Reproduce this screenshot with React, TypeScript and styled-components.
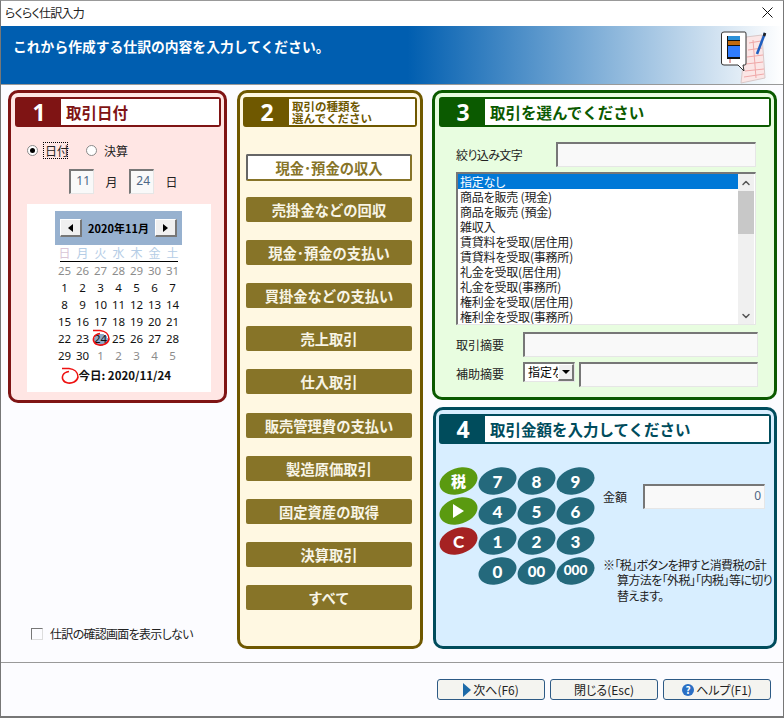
import { createGlobalStyle, styled } from 'styled-components';
import { ChevronDown, ChevronUp } from 'lucide-react';

const GlobalStyle = createGlobalStyle`
  html, body {
    margin: 0;
    padding: 0;
    background: #fff;
  }
  * {
    box-sizing: border-box;
  }
  body {
    font-family: 'Noto Sans CJK JP', 'Noto Sans', sans-serif;
    font-size: 12px;
    font-feature-settings: 'palt';
    color: #222;
  }
`;

const Window = styled.div`
  width: 784px;
  height: 718px;
  border: 1px solid #777;
  border-bottom-width: 2px;
  border-top-color: #999;
  background: #fcfcff;
  display: flex;
  flex-direction: column;
  overflow: hidden;
`;

const TitleBar = styled.div`
  height: 25px;
  flex: none;
  background: #fff;
  display: flex;
  align-items: center;
  justify-content: space-between;
  padding: 0 10px 2px 4px;
  letter-spacing: -0.8px;
`;

const Banner = styled.div`
  height: 58px;
  flex: none;
  display: flex;
  align-items: flex-start;
  justify-content: space-between;
  padding: 4px 15px 0 12px;
  background: linear-gradient(90deg, #005eb0 0%, #005eb0 52%, #ffffff 100%);
`;

const BannerText = styled.div`
  margin-top: 6px;
  color: #fff;
  font-size: 13.8px;
  font-feature-settings: normal;
  font-weight: 700;
  line-height: 20px;
`;

const Main = styled.div`
  height: 579px;
  flex: none;
  border-top: 1px solid #999;
  border-bottom: 1px solid #999;
  padding: 5px 0 0 7px;
  display: flex;
  align-items: flex-start;
`;

const DateColumn = styled.div`
  width: 219px;
  height: 559px;
  margin-right: 10px;
  display: flex;
  flex-direction: column;
`;

const RightColumn = styled.div`
  width: 345px;
  margin-left: 9px;
  display: flex;
  flex-direction: column;
  align-items: flex-end;
  gap: 7px;
`;

const Panel = styled.section<{ $color: string; $bg: string; $w?: number; $h: number; $pl?: number }>`
  width: ${(p) => (p.$w ? `${p.$w}px` : '100%')};
  height: ${(p) => p.$h}px;
  flex: none;
  padding: 4px 3px 4px ${(p) => p.$pl ?? 4}px;
  border: 3px solid ${(p) => p.$color};
  border-radius: 10px;
  background: ${(p) => p.$bg};
  color: ${(p) => p.$color};
`;

const PanelHead = styled.div`
  height: 30px;
  display: flex;
  border: 2px solid currentColor;
  border-radius: 3px;
  background: currentColor;
`;

const PanelNum = styled.div`
  width: 44px;
  flex: none;
  color: #fff;
  font-family: 'Noto Sans', sans-serif;
  font-size: 23px;
  font-weight: 700;
  line-height: 26px;
  text-align: center;
`;

const PanelTitle = styled.div<{ $color: string; $small?: boolean }>`
  flex: 1;
  background: #fff;
  color: ${(p) => p.$color};
  padding: ${(p) => (p.$small ? '1px 0 0 3px' : '0 0 0 5px')};
  font-size: ${(p) => (p.$small ? 11.5 : 15.5)}px;
  font-feature-settings: normal;
  font-weight: 700;
  line-height: ${(p) => (p.$small ? '12px' : '26px')};
  white-space: nowrap;
`;

const RadioRow = styled.div`
  margin: 15px 0 0 12px;
  height: 17px;
  display: flex;
  align-items: center;
  color: #222;
`;

const Radio = styled.span<{ $on?: boolean }>`
  width: 11px;
  height: 11px;
  flex: none;
  border-radius: 50%;
  border: 1px solid #8a8a8a;
  background: #fff;
  display: flex;
  align-items: center;
  justify-content: center;
  &::after {
    content: '';
    width: 5px;
    height: 5px;
    border-radius: 50%;
    background: ${(p) => (p.$on ? '#000' : 'transparent')};
  }
`;

const RadioLabel = styled.span<{ $focus?: boolean }>`
  margin: 0 18px 0 5px;
  padding: 0 1px;
  width: 25px;
  height: 17px;
  line-height: 15px;
  white-space: nowrap;
  border: 1px dotted ${(p) => (p.$focus ? '#000' : 'transparent')};
`;

const DateRow = styled.div`
  margin: 10px 0 0 54px;
  display: flex;
  align-items: center;
  color: #222;
`;

const Sunken = styled.div<{ $w: number; $align?: string }>`
  width: ${(p) => p.$w}px;
  height: 25px;
  flex: none;
  border-style: solid;
  border-width: 2px 1px 1px 2px;
  border-color: #777 #e6e6e6 #e6e6e6 #777;
  background: #f9f9f9;
  color: #4d6785;
  text-align: ${(p) => p.$align || 'left'};
  padding-right: 3px;
  line-height: 19px;
  font-family: 'Noto Sans', sans-serif;
  font-size: 12px;
`;

const DateUnit = styled.span`
  width: 35px;
  text-align: center;
`;

const Calendar = styled.div`
  margin: 10px 0 0 12px;
  width: 184px;
  height: 188px;
  padding: 7px 1px 0 0;
  background: #fff;
  display: flex;
  flex-direction: column;
  align-items: center;
  color: #111;
`;

const CalHead = styled.div`
  width: 127px;
  height: 34px;
  flex: none;
  background: #97b1cf;
  display: flex;
  align-items: center;
  justify-content: space-between;
  padding: 0 5px;
  font-size: 11px;
  font-weight: 700;
  color: #000;
`;

const CalNav = styled.div`
  width: 22px;
  height: 18px;
  background: #f0f0f0;
  border-style: solid;
  border-width: 1px 2px 2px 1px;
  border-color: #fff #777 #777 #fff;
  display: flex;
  align-items: center;
  justify-content: center;
`;

const Arrow = styled.span<{ $left?: boolean }>`
  width: 0;
  height: 0;
  border-style: solid;
  border-width: 4px 0 4px 5px;
  border-color: transparent transparent transparent #000;
  transform: ${(p) => (p.$left ? 'rotate(180deg)' : 'none')};
`;

const WeekRow = styled.div`
  width: 126px;
  height: 17px;
  flex: none;
  display: grid;
  grid-template-columns: repeat(7, 18px);
  text-align: center;
  line-height: 16px;
  position: relative;
  &::after {
    content: '';
    position: absolute;
    left: 4px;
    right: 4px;
    bottom: 0;
    height: 1px;
    background: #000;
  }
`;

const WeekDay = styled.span<{ $sun?: boolean }>`
  color: ${(p) => (p.$sun ? '#d9c6d6' : '#b5cde6')};
`;

const DayGrid = styled.div`
  width: 126px;
  flex: none;
  display: grid;
  grid-template-columns: repeat(7, 18px);
  grid-auto-rows: 17px;
`;

const Day = styled.span<{ $muted?: boolean; $picked?: boolean }>`
  position: relative;
  text-align: center;
  font-family: 'Noto Sans', sans-serif;
  font-size: 11.5px;
  line-height: 17px;
  color: ${(p) => (p.$muted ? '#8c8c8c' : '#111')};
  background: ${(p) =>
    p.$picked
      ? 'radial-gradient(ellipse 7px 6px at 50% 58%, #8ea8c8 96%, transparent 100%)'
      : 'transparent'};
`;

const Scribble = styled.svg<{ $over?: boolean }>`
  flex: none;
  ${(p) =>
    p.$over &&
    `
    position: absolute;
    left: 0;
    top: -1px;
  `}
`;

const TodayRow = styled.div`
  margin-top: 2px;
  width: 126px;
  height: 18px;
  display: flex;
  align-items: center;
  gap: 0;
  padding-left: 5px;
  font-size: 11.5px;
  font-weight: 700;
`;

const SkipCheck = styled.label`
  margin: auto 0 7px 23px;
  display: flex;
  align-items: center;
  gap: 7px;
  color: #222;
  letter-spacing: -0.7px;
`;

const CheckBox = styled.span`
  width: 12px;
  height: 12px;
  border-style: solid;
  border-width: 1px;
  border-color: #777 #ddd #ddd #777;
  background: #fcfcff;
`;

const TypeList = styled.div`
  margin: 27px 0 0 3px;
  width: 166px;
  display: flex;
  flex-direction: column;
  gap: 18.1px;
`;

const TypeButton = styled.div<{ $active?: boolean }>`
  height: ${(p) => (p.$active ? 27 : 25)}px;
  margin-bottom: ${(p) => (p.$active ? -2 : 0)}px;
  border-radius: 2px;
  border-style: solid;
  border-width: ${(p) => (p.$active ? '2px' : 0)};
  border-color: ${(p) => (p.$active ? '#666 #877428 #877428 #666' : 'transparent')};
  background: ${(p) => (p.$active ? '#fff' : '#877428')};
  color: ${(p) => (p.$active ? '#877428' : '#f8f5e6')};
  font-size: 14.3px;
  font-feature-settings: normal;
  font-weight: 700;
  line-height: ${(p) => (p.$active ? 23 : 25)}px;
  text-align: center;
  white-space: nowrap;
`;

const FieldRow = styled.div<{ $top: number }>`
  margin: ${(p) => p.$top}px 0 0 17px;
  display: flex;
  align-items: flex-start;
  color: #222;
`;

const FieldLabel = styled.span<{ $w: number; $pt?: number; $tight?: boolean }>`
  width: ${(p) => p.$w}px;
  flex: none;
  line-height: 25px;
  margin-top: ${(p) => p.$pt ?? 0}px;
  letter-spacing: ${(p) => (p.$tight ? '-0.6px' : 'normal')};
`;

const ListBox = styled.div`
  margin: 5px 0 0 17px;
  width: 300px;
  height: 153px;
  display: flex;
  border-style: solid;
  border-width: 2px 1px 1px 2px;
  border-color: #777 #e6e6e6 #e6e6e6 #777;
  background: #fff;
  color: #222;
  overflow: hidden;
`;

const ListRows = styled.div`
  flex: 1;
`;

const ListRow = styled.div<{ $on?: boolean }>`
  height: 15px;
  line-height: 15px;
  padding-left: 2px;
  letter-spacing: -0.2px;
  background: ${(p) => (p.$on ? '#0078d7' : 'transparent')};
  color: ${(p) => (p.$on ? '#fff' : '#222')};
`;

const ScrollBar = styled.div`
  width: 16px;
  flex: none;
  background: #f0f0f0;
  margin-right: 1px;
  display: flex;
  flex-direction: column;
  align-items: center;
  color: #555;
`;

const ScrollCap = styled.div`
  height: 17px;
  flex: none;
  display: flex;
  align-items: center;
  justify-content: center;
`;

const ScrollThumb = styled.div`
  width: 100%;
  height: 43px;
  flex: none;
  background: #c8c8c8;
  margin-bottom: auto;
`;

const Combo = styled.div`
  width: 52px;
  height: 20px;
  flex: none;
  margin-right: 4px;
  display: flex;
  border-style: solid;
  border-width: 2px 1px 1px 2px;
  border-color: #777 #e6e6e6 #e6e6e6 #777;
  background: #fff;
  overflow: hidden;
`;

const ComboText = styled.span`
  flex: 1;
  overflow: hidden;
  white-space: nowrap;
  line-height: 16px;
  padding-left: 3px;
  color: #000;
`;

const ComboButton = styled.span`
  width: 16px;
  flex: none;
  background: #f0f0f0;
  border-style: solid;
  border-width: 1px 2px 2px 1px;
  border-color: #fff #777 #777 #fff;
  display: flex;
  align-items: center;
  justify-content: center;
  &::after {
    content: '';
    border-style: solid;
    border-width: 4px 4px 0 4px;
    border-color: #000 transparent transparent transparent;
  }
`;

const AmountBody = styled.div`
  margin-top: 23px;
  display: flex;
  padding-left: 1px;
`;

const KeyPad = styled.div`
  width: 156px;
  flex: none;
  display: grid;
  grid-template-columns: repeat(4, 39px);
  grid-auto-rows: 30px;
`;

const Key = styled.div<{ $bg: string; $size?: number; $col?: number }>`
  position: relative;
  width: 37px;
  height: 28px;
  grid-column: ${(p) => p.$col ?? 'auto'};
  display: flex;
  align-items: center;
  justify-content: center;
  color: #fff;
  font-family: Lato, 'Noto Sans CJK JP', sans-serif;
  font-size: ${(p) => p.$size ?? 17}px;
  font-weight: 900;
  line-height: 1;
  &::before {
    content: '';
    position: absolute;
    left: -1px;
    top: 1px;
    width: 39px;
    height: 26px;
    border-radius: 50%;
    background: ${(p) => p.$bg};
    transform: rotate(-18deg);
  }
  & > * {
    position: relative;
  }
`;

const PlayMark = styled.span`
  border-style: solid;
  border-width: 7px 0 7px 11px;
  border-color: transparent transparent transparent #fff;
`;

const AmountSide = styled.div`
  margin: 17px 0 0 7px;
  flex: 1;
  color: #222;
`;

const AmountRow = styled.div`
  display: flex;
  align-items: center;
`;

const AmountLabel = styled.span`
  width: 40px;
`;

const Note = styled.p`
  margin: 48px 0 0 0;
  padding-left: 14px;
  text-indent: -14px;
  line-height: 15.3px;
  font-size: 12px;
  letter-spacing: -0.6px;
  white-space: nowrap;
`;

const Footer = styled.div`
  flex: 1;
  display: flex;
  justify-content: flex-end;
  gap: 5px;
  padding: 16px 12px 0 0;
`;

const FootButton = styled.div`
  width: 108px;
  height: 21px;
  display: flex;
  align-items: center;
  justify-content: center;
  gap: 2px;
  border: 1px solid #2d5a85;
  border-radius: 3px;
  background: #f4f4f0;
  color: #222;
  line-height: 19px;
`;

const NextMark = styled.span`
  border-style: solid;
  border-width: 7px 0 7px 8px;
  border-color: transparent transparent transparent #1c6aa8;
`;

const HelpMark = styled.span`
  width: 12px;
  height: 12px;
  border-radius: 50%;
  background: #2a6fc4;
  color: #fff;
  font-size: 10px;
  font-weight: 700;
  line-height: 12px;
  text-align: center;
`;

const BannerIcon = () => (
  <svg width="48" height="54" viewBox="0 0 48 54">
    <path d="M26 7 L42 5 L45 48 L21 53 Z" fill="#fbe6e6" stroke="#d8c8c8" />
    <path
      d="M29 13 L41 11 M28 20 L42 18 M27 27 L43 25 M26 34 L43 32 M25 41 L44 39 M24 47 L44 44 M33 10 L36 48"
      stroke="#f0a8a8"
      strokeWidth="1"
    />
    <path d="M45 3 L37 24" stroke="#1f5fc0" strokeWidth="2.5" />
    <path d="M45 3 L44 6" stroke="#222" strokeWidth="2.5" />
    <path
      d="M4 2 H25 Q26 2 26 4 V33 Q26 35 25 35 H23 L24 41 L18 35 H4 Q1.5 35 1.5 33 V4 Q1.5 2 4 2 Z"
      fill="#fff"
      stroke="#333"
    />
    <rect x="7" y="6" width="13" height="23" fill="#111" />
    <rect x="8" y="6" width="12" height="4" fill="#2a90d8" />
    <rect x="8" y="11" width="12" height="4" fill="#c06a10" />
    <rect x="8" y="16" width="12" height="11" fill="#2f7cff" />
    <path d="M10 29 V33" stroke="#c05050" strokeWidth="1" />
  </svg>
);

const RedCircle = ({ over }: { over?: boolean }) => (
  <Scribble $over={over} width="18" height="17" viewBox="0 0 18 17" fill="none">
    <path
      d="M1 1.5 H8 C13 2 17 5 17 10 C16 15 11 16.5 7 16 C2 15.5 0.5 11 2 8 C3 6 5 5 8 4.5"
      stroke="#ee1111"
      strokeWidth="1.6"
    />
  </Scribble>
);

const WEEK = ['日', '月', '火', '水', '木', '金', '土'];
const DAYS = [
  25, 26, 27, 28, 29, 30, 31,
  1, 2, 3, 4, 5, 6, 7,
  8, 9, 10, 11, 12, 13, 14,
  15, 16, 17, 18, 19, 20, 21,
  22, 23, 24, 25, 26, 27, 28,
  29, 30, 1, 2, 3, 4, 5,
];

const TYPES = [
  '現金･預金の収入',
  '売掛金などの回収',
  '現金･預金の支払い',
  '買掛金などの支払い',
  '売上取引',
  '仕入取引',
  '販売管理費の支払い',
  '製造原価取引',
  '固定資産の取得',
  '決算取引',
  'すべて',
];

const ITEMS = [
  '指定なし',
  '商品を販売 (現金)',
  '商品を販売 (預金)',
  '雑収入',
  '賃貸料を受取(居住用)',
  '賃貸料を受取(事務所)',
  '礼金を受取(居住用)',
  '礼金を受取(事務所)',
  '権利金を受取(居住用)',
  '権利金を受取(事務所)',
];

const KEYS = [
  ['税', '#5a9a10', 15],
  ['7', '#24697c'],
  ['8', '#24697c'],
  ['9', '#24697c'],
  ['play', '#5a9a10'],
  ['4', '#24697c'],
  ['5', '#24697c'],
  ['6', '#24697c'],
  ['C', '#a52222'],
  ['1', '#24697c'],
  ['2', '#24697c'],
  ['3', '#24697c'],
] as const;

const DOWN_KEYS = [
  ['0', 17, 2],
  ['00', 15, 3],
  ['000', 13.5, 4],
] as const;

export default function App() {
  return (
    <>
      <GlobalStyle />
      <Window>
        <TitleBar>
          <span>らくらく仕訳入力</span>
          <svg width="11" height="11" viewBox="0 0 11 11">
            <path d="M0.5 0.5 L10.5 10.5 M10.5 0.5 L0.5 10.5" stroke="#111" strokeWidth="1" />
          </svg>
        </TitleBar>
        <Banner>
          <BannerText>これから作成する仕訳の内容を入力してください。</BannerText>
          <BannerIcon />
        </Banner>
        <Main>
          <DateColumn>
            <Panel $color="#7f1414" $bg="#ffe6e4" $h={313}>
              <PanelHead>
                <PanelNum>1</PanelNum>
                <PanelTitle $color="#7f1414">取引日付</PanelTitle>
              </PanelHead>
              <RadioRow>
                <Radio $on />
                <RadioLabel $focus>日付</RadioLabel>
                <Radio />
                <RadioLabel>決算</RadioLabel>
              </RadioRow>
              <DateRow>
                <Sunken $w={25} $align="right">11</Sunken>
                <DateUnit>月</DateUnit>
                <Sunken $w={25} $align="right">24</Sunken>
                <DateUnit>日</DateUnit>
              </DateRow>
              <Calendar>
                <CalHead>
                  <CalNav><Arrow $left /></CalNav>
                  <span>2020年11月</span>
                  <CalNav><Arrow /></CalNav>
                </CalHead>
                <WeekRow>
                  {WEEK.map((w, i) => (
                    <WeekDay key={w} $sun={i === 0}>{w}</WeekDay>
                  ))}
                </WeekRow>
                <DayGrid>
                  {DAYS.map((d, i) => {
                    const muted = i < 7 || i > 36;
                    const picked = i === 30;
                    return (
                      <Day key={i} $muted={muted} $picked={picked}>
                        {d}
                        {picked && <RedCircle over />}
                      </Day>
                    );
                  })}
                </DayGrid>
                <TodayRow>
                  <RedCircle />
                  今日: 2020/11/24
                </TodayRow>
              </Calendar>
            </Panel>
            <SkipCheck>
              <CheckBox />
              仕訳の確認画面を表示しない
            </SkipCheck>
          </DateColumn>

          <Panel $color="#6f5800" $bg="#fff8e2" $w={186} $h={559} $pl={3}>
            <PanelHead>
              <PanelNum>2</PanelNum>
              <PanelTitle $color="#6f5800" $small>
                取引の種類を
                <br />
                選んでください
              </PanelTitle>
            </PanelHead>
            <TypeList>
              {TYPES.map((t, i) => (
                <TypeButton key={t} $active={i === 0}>{t}</TypeButton>
              ))}
            </TypeList>
          </Panel>

          <RightColumn>
            <Panel $color="#0b5a00" $bg="#e8fde0" $h={310}>
              <PanelHead>
                <PanelNum>3</PanelNum>
                <PanelTitle $color="#0b5a00">取引を選んでください</PanelTitle>
              </PanelHead>
              <FieldRow $top={15}>
                <FieldLabel $w={100} $tight>絞り込み文字</FieldLabel>
                <Sunken $w={200} />
              </FieldRow>
              <ListBox>
                <ListRows>
                  {ITEMS.map((t, i) => (
                    <ListRow key={t} $on={i === 0}>{t}</ListRow>
                  ))}
                </ListRows>
                <ScrollBar>
                  <ScrollCap><ChevronUp size={12} strokeWidth={3} /></ScrollCap>
                  <ScrollThumb />
                  <ScrollCap><ChevronDown size={12} strokeWidth={3} /></ScrollCap>
                </ScrollBar>
              </ListBox>
              <FieldRow $top={7}>
                <FieldLabel $w={67}>取引摘要</FieldLabel>
                <Sunken $w={235} />
              </FieldRow>
              <FieldRow $top={5}>
                <FieldLabel $w={67} $pt={-1}>補助摘要</FieldLabel>
                <Combo>
                  <ComboText>指定なし</ComboText>
                  <ComboButton />
                </Combo>
                <Sunken $w={179} />
              </FieldRow>
            </Panel>

            <Panel $color="#004c5c" $bg="#d8eeff" $w={344} $h={242} $pl={3}>
              <PanelHead>
                <PanelNum>4</PanelNum>
                <PanelTitle $color="#004c5c">取引金額を入力してください</PanelTitle>
              </PanelHead>
              <AmountBody>
                <KeyPad>
                  {KEYS.map(([label, bg, size]) => (
                    <Key key={label} $bg={bg} $size={size}>
                      {label === 'play' ? <PlayMark /> : <span>{label}</span>}
                    </Key>
                  ))}
                  {DOWN_KEYS.map(([label, size, col]) => (
                    <Key key={label} $bg="#24697c" $size={size} $col={col}>
                      <span>{label}</span>
                    </Key>
                  ))}
                </KeyPad>
                <AmountSide>
                  <AmountRow>
                    <AmountLabel>金額</AmountLabel>
                    <Sunken $w={122} $align="right">0</Sunken>
                  </AmountRow>
                  <Note>
                    ※「税」ボタンを押すと消費税の計
                    <br />
                    算方法を「外税」「内税」等に切り
                    <br />
                    替えます。
                  </Note>
                </AmountSide>
              </AmountBody>
            </Panel>
          </RightColumn>
        </Main>
        <Footer>
          <FootButton><NextMark />次へ(F6)</FootButton>
          <FootButton>閉じる(Esc)</FootButton>
          <FootButton><HelpMark>?</HelpMark>ヘルプ(F1)</FootButton>
        </Footer>
      </Window>
    </>
  );
}
